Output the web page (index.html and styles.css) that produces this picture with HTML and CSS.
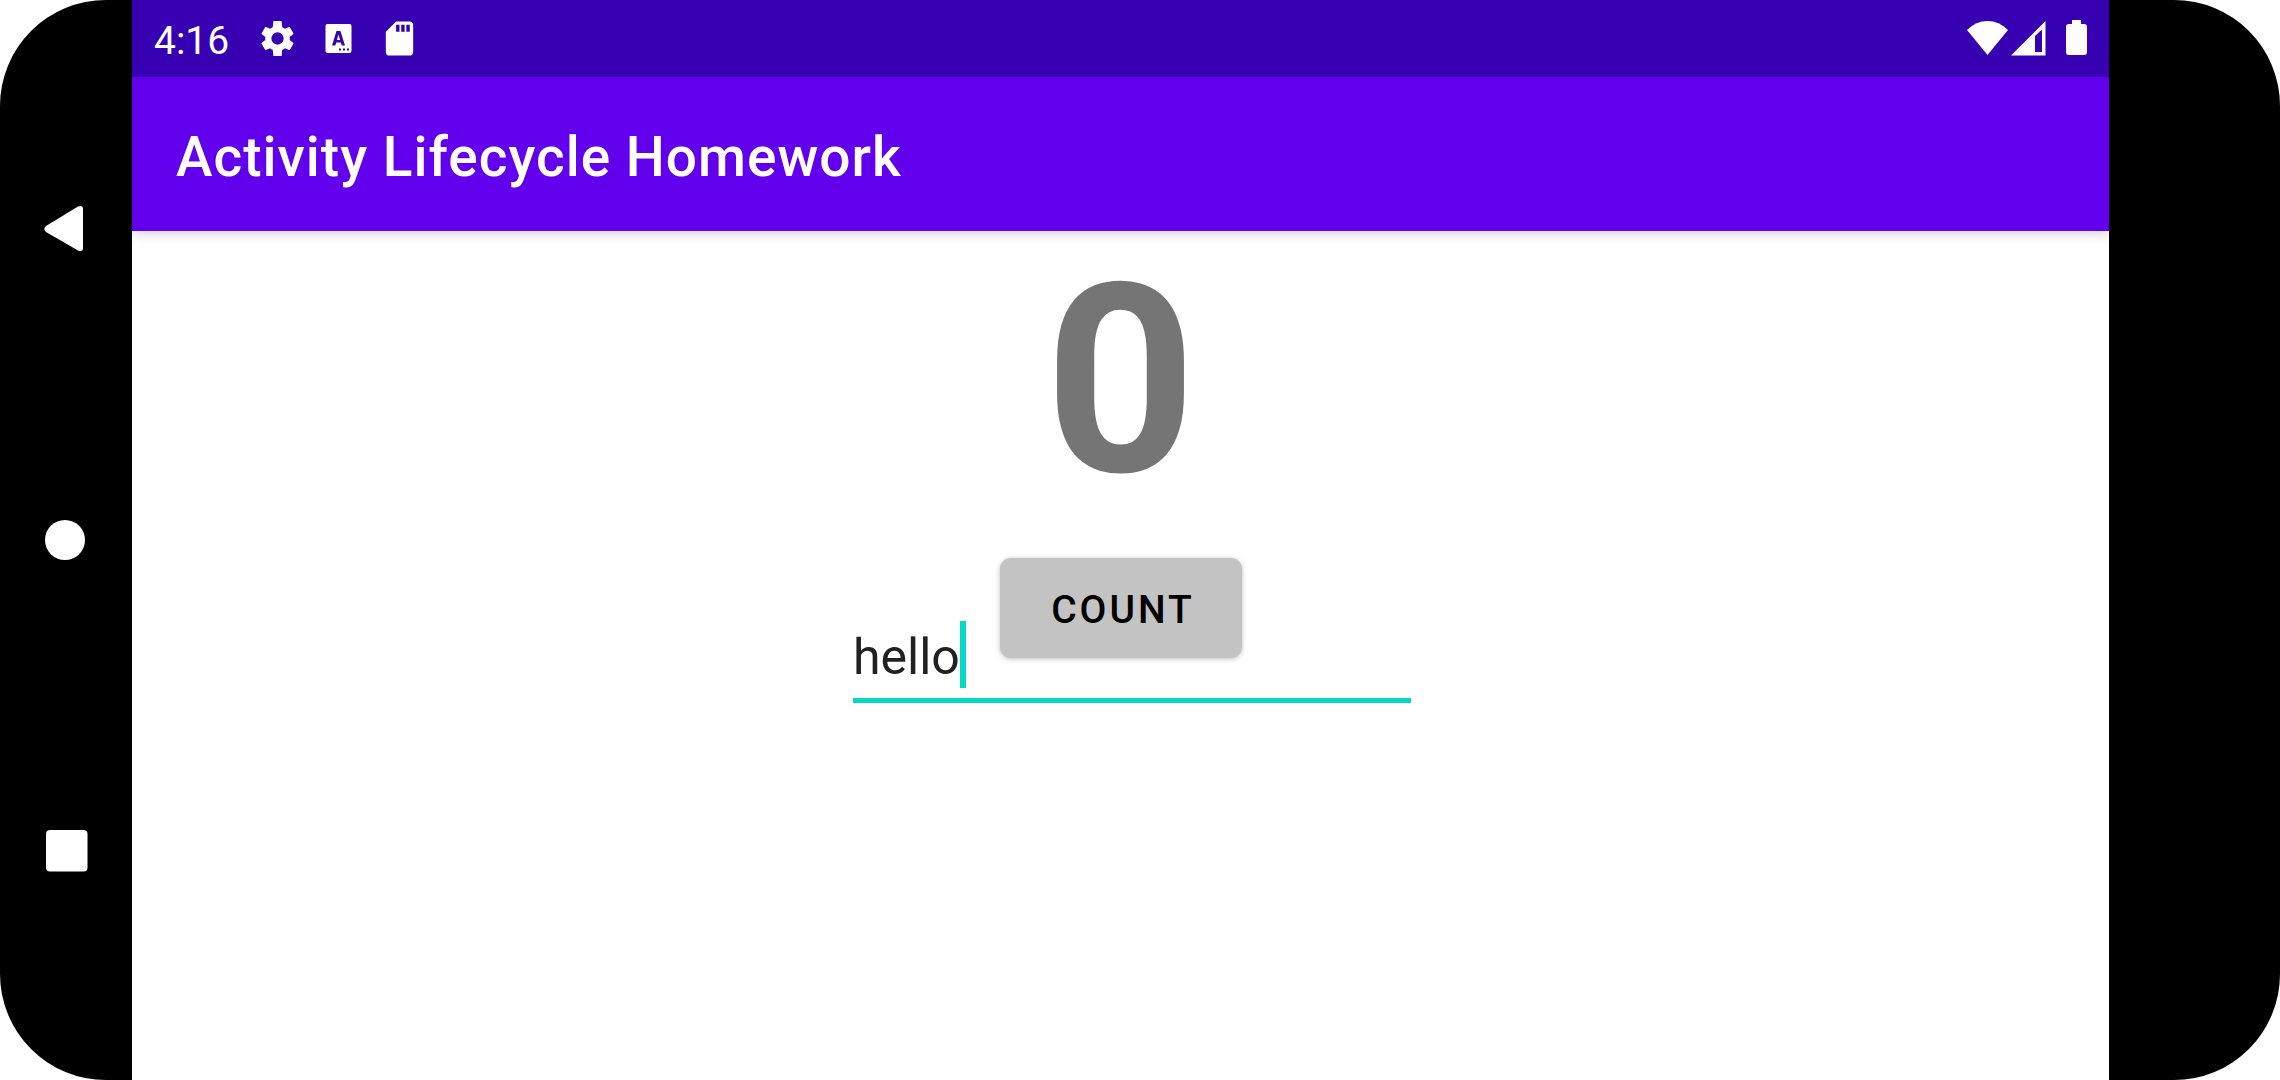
FILE: index.html
```html
<!DOCTYPE html>
<html lang="en">
<head>
<meta charset="utf-8">
<meta name="viewport" content="width=device-width, initial-scale=1">
<title>Activity Lifecycle Homework</title>
<link rel="stylesheet" href="styles.css">
</head>
<body>
<div class="device">
  <nav class="nav" aria-label="System navigation">
    <button class="nav-button" type="button" aria-label="Back">
      <svg viewBox="0 0 132 132"><path d="M46 64 78 44.600Q83 42.500 83 47V86Q83 90.500 78 88.400L46 70Q42.500 67 46 64Z"/></svg>
    </button>
    <button class="nav-button" type="button" aria-label="Home">
      <svg viewBox="0 0 132 132"><circle cx="65" cy="66" r="20"/></svg>
    </button>
    <button class="nav-button" type="button" aria-label="Recent apps">
      <svg viewBox="0 0 132 132"><rect x="46" y="44" width="41.500" height="41.500" rx="4"/></svg>
    </button>
  </nav>
  <div class="screen">
    <div class="status-bar">
      <div class="status-left">
        <time class="clock">4:16</time>
        <svg class="status-icon" viewBox="0 0 24 24"><path d="M19.140 12.940c.04-.3.06-.61.06-.94 0-.32-.02-.64-.07-.94l2.030-1.580c.18-.14.23-.41.12-.61l-1.920-3.320c-.12-.22-.37-.29-.59-.22l-2.390.96c-.5-.38-1.030-.7-1.620-.94L14.400 1.810h-4.800L9.240 5.350c-.59.24-1.130.57-1.620.94l-2.390-.96c-.22-.08-.47 0-.59.22L2.740 8.870c-.12.21-.08.47.12.61l2.030 1.580c-.05.3-.09.63-.09.94s.02.64.07.94l-2.030 1.580c-.18.14-.23.41-.12.61l1.920 3.320c.12.22.37.29.59.22l2.390-.96c.5.38 1.030.7 1.620.94l.36 3.540h4.800l.36-3.540c.59-.24 1.130-.56 1.620-.94l2.390.96c.22.08.47 0 .59-.22l1.920-3.320c.12-.22.07-.47-.12-.61zM12 15.600A3.600 3.600 0 1 1 12 8.400a3.600 3.600 0 0 1 0 7.200z"/></svg>
        <svg class="status-icon" viewBox="0 0 41 41"><path fill-rule="evenodd" d="M9.500 6h22a2 2 0 0 1 2 2v25a2 2 0 0 1-2 2h-22a2 2 0 0 1-2-2V8a2 2 0 0 1 2-2zM18.500 13 14 27.500h3.300l1-3h4.500l1 3H27L22.400 13zM20.500 16.500l1.600 5.500h-3.200zM21 30.500h2v2h-2zM25 30.500h2v2h-2zM29 30.500h2v2h-2z"/></svg>
        <svg class="status-icon" viewBox="0 0 24 24"><path d="M18 2h-8L4 8v12c0 1.100.9 2 2 2h12c1.100 0 2-.9 2-2V4c0-1.100-.9-2-2-2zm-6 6h-2V4h2v4zm3 0h-2V4h2v4zm3 0h-2V4h2v4z"/></svg>
      </div>
      <div class="status-right">
        <svg class="status-icon" viewBox="0 0 41 41"><path d="M20.500 37 0 12Q9 3 20.500 3T41 12Z"/></svg>
        <svg class="status-icon" viewBox="0 0 41 41"><path fill-rule="evenodd" d="M3 37.500 37.500 3V37.500ZM27 18V34H34V11.500Z"/></svg>
        <svg class="status-icon" viewBox="0 0 41 41"><path d="M16 2h9v4h3a3 3 0 0 1 3 3v25a3 3 0 0 1-3 3H13a3 3 0 0 1-3-3V9a3 3 0 0 1 3-3h3z"/></svg>
      </div>
    </div>
    <header class="app-bar"><h1 class="title">Activity Lifecycle Homework</h1></header>
    <main class="content">
      <output class="counter" for="count">0</output>
      <button class="count-button" id="count" type="button">COUNT</button>
      <div class="field">
        <input class="field-input" type="text" value="hello" aria-label="Message">
        <span class="caret"></span>
      </div>
    </main>
  </div>
</div>
</body>
</html>
```
FILE: styles.css
```css
* {
  box-sizing: border-box;
}

body {
  margin: 0;
  background: #fff;
  font-family: Roboto, "Liberation Sans", sans-serif;
}

button,
input {
  font: inherit;
  border: 0;
  padding: 0;
}

svg {
  display: block;
  fill: #fff;
}

.device {
  display: flex;
  min-height: 100vh;
  padding-right: 171px;
  background: #000;
  border-radius: 106px;
}

.nav {
  display: flex;
  flex-direction: column;
  width: 132px;
  padding: 72px 0;
}

.nav-button {
  flex: 1;
  display: flex;
  align-items: center;
  background: none;
}

.nav-button svg {
  width: 132px;
}

.screen {
  flex: 1;
  display: flex;
  flex-direction: column;
  background: #fff;
}

.status-bar {
  display: flex;
  justify-content: space-between;
  height: 77px;
  padding: 0 12px 0 22px;
  background: #3700b3;
  color: #fff;
}

.status-left,
.status-right {
  display: flex;
  align-items: center;
}

.status-left {
  gap: 20px;
}

.status-right .status-icon:last-child {
  margin-left: 7px;
}

.clock {
  margin: 4px 8px 0 0;
  font-size: 39px;
}

.status-icon {
  width: 41px;
  height: 41px;
}

.app-bar {
  display: flex;
  align-items: center;
  height: 154px;
  padding: 6px 44px 0;
  background: #6200ee;
  color: #fff;
  box-shadow: 0 2px 12px rgba(0, 0, 0, 0.2);
  clip-path: inset(0 0 -20px);
}

.title {
  margin: 0;
  font-size: 55px;
  font-weight: 500;
  letter-spacing: 1px;
}

.content {
  display: flex;
  flex-direction: column;
  align-items: center;
}

.counter {
  margin-bottom: 28px;
  color: #757575;
  font-size: 264px;
  font-weight: 700;
  line-height: 299px;
}

.count-button {
  z-index: 1;
  width: 242px;
  height: 100px;
  padding: 4px 0 0 5px;
  border-radius: 11px;
  background: #c3c3c3;
  color: #000;
  font-size: 39px;
  font-weight: 500;
  letter-spacing: 3px;
  box-shadow: 0 1px 5px rgba(0, 0, 0, 0.25);
}

.field {
  display: flex;
  align-items: flex-start;
  width: 558px;
  height: 82px;
  margin: -37px 0 0 23px;
  border-bottom: 5px solid #03dac5;
}

.field-input {
  field-sizing: content;
  height: 67px;
  padding-top: 4px;
  background: none;
  outline: 0;
  color: #212121;
  font-size: 50px;
}

.caret {
  width: 6px;
  height: 67px;
  background: #03dac5;
}
```
